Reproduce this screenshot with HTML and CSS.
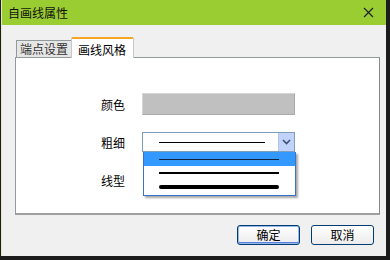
FILE: index.html
```html
<!DOCTYPE html>
<html lang="zh">
<head>
  <meta charset="UTF-8">
  <title>自画线属性</title>
  <link rel="stylesheet" href="styles.css">
</head>
<body>
  <div class="window">
    <div class="titlebar">
      <span class="title">自画线属性</span>
      <svg class="close" width="11" height="11" viewBox="0 0 11 11">
        <path d="M1 1L10 10M10 1L1 10" stroke="#222" stroke-width="1.2" fill="none"/>
      </svg>
    </div>

    <div class="tabs">
      <div class="tab">端点设置</div>
      <div class="tab active">画线风格</div>
    </div>

    <div class="panel">
      <div class="form-row">
        <label>颜色</label>
        <div class="color-box"></div>
      </div>
      <div class="form-row">
        <label>粗细</label>
        <div class="select">
          <div class="select-value"><span class="line w1"></span></div>
          <div class="select-btn">
            <svg width="9" height="6" viewBox="0 0 9 6">
              <path d="M1 1L4.5 4.5L8 1" stroke="#3a4f7a" stroke-width="1.6" fill="none"/>
            </svg>
          </div>
          <div class="dropdown">
            <div class="option selected"><span class="line w1"></span></div>
            <div class="option"><span class="line w2"></span></div>
            <div class="option"><span class="line w3"></span></div>
          </div>
        </div>
      </div>
      <div class="form-row">
        <label>线型</label>
      </div>
    </div>

    <div class="buttons">
      <button class="btn default">确定</button>
      <button class="btn">取消</button>
    </div>
  </div>
</body>
</html>
```

FILE: styles.css
```css
body {
  margin: 0;
  background: #1c1c1c;
  font-family: "Noto Sans CJK SC", "Liberation Sans", sans-serif;
  font-size: 12px;
  color: #000;
}

.window {
  width: 384px;
  height: 256px;
  margin-left: 1px;
  background: #f0f0f0;
  border-left: 1px solid #e8e8c8;
  display: flex;
  flex-direction: column;
}

.titlebar {
  height: 25px;
  background: #9acd32;
  display: flex;
  align-items: center;
  justify-content: space-between;
  padding: 0 12px 0 6px;
}

.title {
  font-size: 12px;
  color: #111;
}

.close {
  display: block;
}

.tabs {
  display: flex;
  align-items: flex-end;
  margin: 12px 0 0 14px;
  height: 20px;
}

.tab {
  height: 16px;
  line-height: 16px;
  padding: 0 3px;
  border: 1px solid #919b9c;
  border-bottom: none;
  background: #e6e6e6;
  color: #333;
}

.tab.active {
  height: 19px;
  line-height: 21px;
  padding: 0 7px 0 6px;
  background: #fff;
  color: #000;
  border-top: 2px solid #f5a623;
  border-radius: 2px 2px 0 0;
  margin-left: -1px;
  position: relative;
  top: 1px;
  border-left-color: #c8c8c8;
  border-right-color: #c8c8c8;
}

.panel {
  margin-left: 13px;
  width: 365px;
  height: 158px;
  background: #fff;
  border: 1px solid #919b9c;
  border-right-color: #8a8a8a;
  border-bottom: 2px solid #a0a0a0;
  box-sizing: border-box;
  padding: 35px 0 0 85px;
  display: flex;
  flex-direction: column;
  gap: 16px;
}

.form-row {
  display: flex;
  align-items: center;
  gap: 17px;
  height: 22px;
}

.form-row label {
  width: 24px;
  font-size: 12px;
}

.color-box {
  width: 153px;
  height: 22px;
  background: #c0c0c0;
  border: 1px solid #d6d6d6;
  border-right-color: #aaa;
  border-bottom-color: #aaa;
  box-sizing: border-box;
}

.select {
  position: relative;
  width: 153px;
  height: 20px;
  border: 1px solid #7f9db9;
  box-sizing: border-box;
  background: #fff;
  display: flex;
}

.select-value {
  flex: 1;
  display: flex;
  align-items: center;
  padding-left: 16px;
}

.select-value .line {
  width: 106px;
}

.select-btn {
  width: 15px;
  background: #c1d3fb;
  border-left: 1px solid #b0c4e8;
  display: flex;
  align-items: center;
  justify-content: center;
}

.line {
  display: block;
  background: #000;
  width: 120px;
}

.line.w1 { height: 1px; }
.line.w2 { height: 2px; }
.line.w3 { height: 4px; border-radius: 2px; }

.dropdown {
  position: absolute;
  left: 0;
  top: 19px;
  width: 153px;
  box-sizing: border-box;
  background: #fff;
  border: 1px solid #3b73c9;
  border-top: none;
  box-shadow: 2px 2px 2px rgba(0, 0, 0, 0.35);
  padding-bottom: 1px;
}

.option {
  height: 14px;
  display: flex;
  align-items: center;
  padding-left: 15px;
}

.option.selected {
  background: #3399ff;
}

.option.selected .line {
  background: #10233f;
}

.buttons {
  display: flex;
  justify-content: flex-end;
  gap: 11px;
  padding: 10px 12px 0 0;
}

.btn {
  width: 63px;
  height: 20px;
  font-family: inherit;
  font-size: 12px;
  line-height: 16px;
  padding: 0;
  background: linear-gradient(#fff, #ececec);
  border: 1px solid #003c74;
  border-radius: 3px;
  color: #000;
}

.btn.default {
  box-shadow: inset 0 0 0 1px #98b8ea, inset 0 -1px 0 1px #5a7edc;
}
```
